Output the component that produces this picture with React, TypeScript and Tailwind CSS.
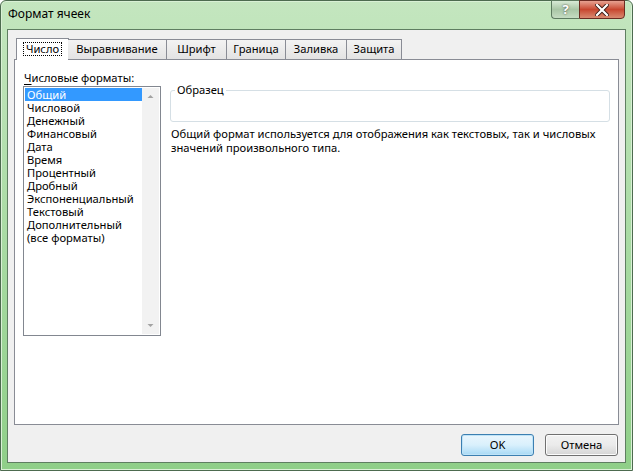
import React from "react";

const items = [
  "Общий",
  "Числовой",
  "Денежный",
  "Финансовый",
  "Дата",
  "Время",
  "Процентный",
  "Дробный",
  "Экспоненциальный",
  "Текстовый",
  "Дополнительный",
  "(все форматы)",
];

const tabs = [
  { name: "Выравнивание", w: "w-[99px]" },
  { name: "Шрифт", w: "w-[61px]" },
  { name: "Граница", w: "w-[60px]" },
  { name: "Заливка", w: "w-[62px]" },
  { name: "Защита", w: "w-[56px]" },
];

export default function App() {
  return (
    <div
      className="w-[633px] h-[471px] overflow-hidden text-[11.2px] text-black"
      style={{ fontFamily: '"Noto Sans", "Open Sans", sans-serif' }}
    >
      <div className="w-full h-full flex flex-col rounded-t-[6px] border border-[#4d6b4f] bg-gradient-to-b from-[#c4e6bf] via-[#a9dba4] to-[#8fcf88] shadow-[inset_0_0_0_1px_#d9f0d5]">
        {/* Title bar */}
        <div className="h-[28px] flex items-start shrink-0">
          <div className="pl-[7px] pt-[5px] text-[12px] leading-[16px] text-black">
            Формат ячеек
          </div>
          <div className="ml-auto mr-[7px] flex">
            <div className="w-[28px] h-[19px] -mt-px rounded-bl-[4px] border border-[#5d7a60] border-r-0 bg-gradient-to-b from-[#d8ead6] via-[#a9c6a6] to-[#c5dcc2] flex items-center justify-center text-white font-bold text-[13px] leading-none [text-shadow:0_0_2px_#333]">
              ?
            </div>
            <div className="w-[46px] h-[19px] -mt-px rounded-br-[4px] border border-[#6b2b22] bg-gradient-to-b from-[#e6a191] via-[#c7462f] to-[#d88a70] flex items-center justify-center">
              <svg width="14" height="12" viewBox="0 0 14 12">
                <path d="M2 1 L12 11 M12 1 L2 11" stroke="#3a1a14" strokeWidth="4" strokeLinecap="square" />
                <path d="M2 1 L12 11 M12 1 L2 11" stroke="#ffffff" strokeWidth="2.2" strokeLinecap="square" />
              </svg>
            </div>
          </div>
        </div>

        {/* Client area */}
        <div className="flex-1 mx-[6px] mb-[7px] border border-[#5f7e61] bg-[#f0f0f0] flex flex-col">
          {/* Tabs */}
          <div className="flex items-end pl-[8px] pt-[7px] h-[29px] shrink-0 relative z-10">
            <div className="w-[53px] h-[22px] border border-[#898c95] border-b-0 bg-white flex items-center justify-center -mb-px pb-[1px]">
              <span className="px-[3px] leading-[14px] outline outline-1 outline-dotted outline-black -outline-offset-1">Число</span>
            </div>
            {tabs.map((t, i) => (
              <div
                key={t.name}
                className={`${t.w} h-[20px] border border-[#898c95] border-b-0 bg-gradient-to-b from-[#f3f3f3] to-[#e3e3e3] flex items-center justify-center ${i === 0 ? "-ml-[1px] border-l-0" : "-ml-[1px]"}`}
              >
                {t.name}
              </div>
            ))}
          </div>

          {/* Panel */}
          <div className="mx-[6px] h-[366px] border border-[#898c95] bg-white flex pt-[10px] pl-[8px] pr-[8px]">
            <div className="flex flex-col w-[138px]">
              <div className="pl-[1px] leading-[15px] h-[16px]">
                <span className="underline underline-offset-[2px]">Ч</span>исловые форматы:
              </div>
              <div className="w-[138px] h-[250px] border border-[#828790] bg-white flex p-px">
                <div className="flex-1 flex flex-col">
                  {items.map((it, i) => (
                    <div
                      key={it}
                      className={`h-[13px] leading-[13px] pl-[2px] whitespace-nowrap ${i === 0 ? "bg-[#3399ff] text-white" : ""}`}
                    >
                      {it}
                    </div>
                  ))}
                </div>
                <div className="w-[17px] bg-[#f2f2f2] flex flex-col justify-between items-center">
                  <svg width="17" height="17" viewBox="0 0 17 17">
                    <path d="M5.5 10 L8.5 7 L11.5 10 Z" fill="#a3a3a3" />
                  </svg>
                  <svg width="17" height="17" viewBox="0 0 17 17">
                    <path d="M5.5 7 L8.5 10 L11.5 7 Z" fill="#a3a3a3" />
                  </svg>
                </div>
              </div>
            </div>
            <div className="ml-[9px] flex-1 flex flex-col pt-[20px]">
              <div className="relative h-[32px] border border-[#d5dfe5] rounded-[3px]">
                <div className="absolute left-[4px] -top-[9px] bg-white px-[2px] leading-[15px]">
                  Образец
                </div>
              </div>
              <div className="mt-[5px] pl-[1px] leading-[14px] whitespace-nowrap">
                Общий формат используется для отображения как текстовых, так и числовых
                <br />
                значений произвольного типа.
              </div>
            </div>
          </div>

          {/* Buttons */}
          <div className="flex justify-end gap-[11px] pr-[7px] pt-[9px]">
            <div className="w-[73px] h-[22px] rounded-[3px] border border-[#3c7fb1] bg-gradient-to-b from-[#eaf6fd] via-[#d9f0fc] to-[#a7d9f5] shadow-[inset_0_0_0_1px_#bfe3f7] flex items-center justify-center">
              OK
            </div>
            <div className="w-[73px] h-[22px] rounded-[3px] border border-[#707070] bg-gradient-to-b from-[#f2f2f2] via-[#ebebeb] to-[#d5d5d5] shadow-[inset_0_0_0_1px_#fcfcfc] flex items-center justify-center">
              Отмена
            </div>
          </div>
        </div>
      </div>
    </div>
  );
}
